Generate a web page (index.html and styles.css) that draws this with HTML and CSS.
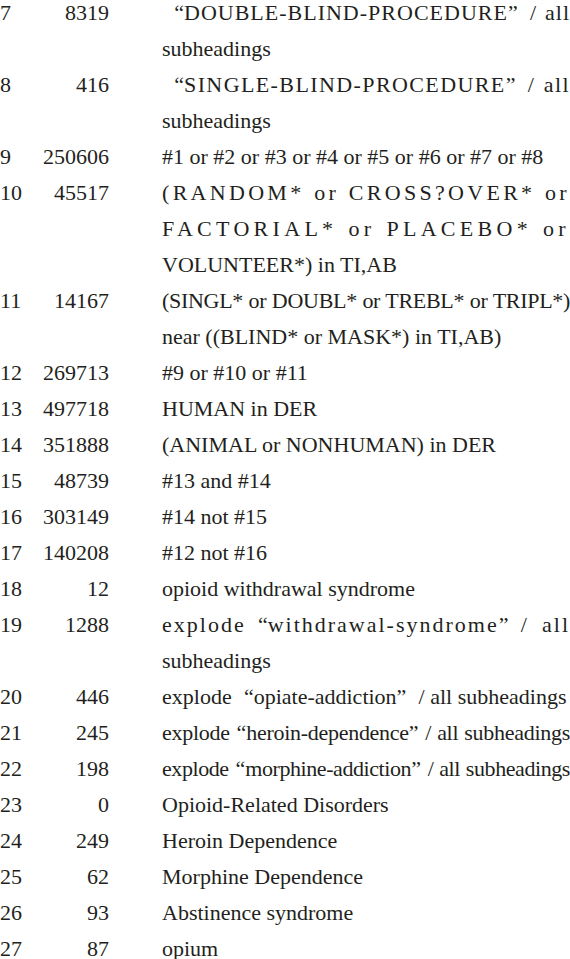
FILE: index.html
```html
<!DOCTYPE html>
<html lang="en">
<head>
<meta charset="utf-8">
<title>Search strategy</title>
<link rel="stylesheet" href="styles.css">
</head>
<body>
<div class="table">
  <div class="row"><span class="num">7</span><span class="count">8319</span>
    <div class="query"><span class="line spread s1"><span class="ql">“</span>DOUBLE-BLIND-PROCEDURE<span class="qr">”</span>/ all</span><span class="line">subheadings</span></div></div>
  <div class="row"><span class="num">8</span><span class="count">416</span>
    <div class="query"><span class="line spread s1b"><span class="ql">“</span>SINGLE-BLIND-PROCEDURE<span class="qr">”</span>/ all</span><span class="line">subheadings</span></div></div>
  <div class="row"><span class="num">9</span><span class="count">250606</span>
    <div class="query"><span class="line">#1 or #2 or #3 or #4 or #5 or #6 or #7 or #8</span></div></div>
  <div class="row"><span class="num">10</span><span class="count">45517</span>
    <div class="query"><span class="line spread s2">(RANDOM* or CROSS?OVER* or</span><span class="line spread s3">FACTORIAL* or PLACEBO* or</span><span class="line">VOLUNTEER*) in TI,AB</span></div></div>
  <div class="row"><span class="num">11</span><span class="count">14167</span>
    <div class="query"><span class="line spread tight">(SINGL* or DOUBL* or TREBL* or TRIPL*)</span><span class="line">near ((BLIND* or MASK*) in TI,AB)</span></div></div>
  <div class="row"><span class="num">12</span><span class="count">269713</span>
    <div class="query"><span class="line">#9 or #10 or #11</span></div></div>
  <div class="row"><span class="num">13</span><span class="count">497718</span>
    <div class="query"><span class="line">HUMAN in DER</span></div></div>
  <div class="row"><span class="num">14</span><span class="count">351888</span>
    <div class="query"><span class="line">(ANIMAL or NONHUMAN) in DER</span></div></div>
  <div class="row"><span class="num">15</span><span class="count">48739</span>
    <div class="query"><span class="line">#13 and #14</span></div></div>
  <div class="row"><span class="num">16</span><span class="count">303149</span>
    <div class="query"><span class="line">#14 not #15</span></div></div>
  <div class="row"><span class="num">17</span><span class="count">140208</span>
    <div class="query"><span class="line">#12 not #16</span></div></div>
  <div class="row"><span class="num">18</span><span class="count">12</span>
    <div class="query"><span class="line">opioid withdrawal syndrome</span></div></div>
  <div class="row"><span class="num">19</span><span class="count">1288</span>
    <div class="query"><span class="line spread s4">explode<span class="ql">“</span>withdrawal-syndrome<span class="qr">”</span>/ all</span><span class="line">subheadings</span></div></div>
  <div class="row"><span class="num">20</span><span class="count">446</span>
    <div class="query"><span class="line">explode<span class="ql">“</span>opiate-addiction<span class="qr">”</span>/ all subheadings</span></div></div>
  <div class="row"><span class="num">21</span><span class="count">245</span>
    <div class="query"><span class="line spread squeeze1">explode<span class="ql narrow">“</span>heroin-dependence<span class="qr narrow">”</span>/ all subheadings</span></div></div>
  <div class="row"><span class="num">22</span><span class="count">198</span>
    <div class="query"><span class="line spread squeeze2">explode<span class="ql narrow">“</span>morphine-addiction<span class="qr narrow">”</span>/ all subheadings</span></div></div>
  <div class="row"><span class="num">23</span><span class="count">0</span>
    <div class="query"><span class="line">Opioid-Related Disorders</span></div></div>
  <div class="row"><span class="num">24</span><span class="count">249</span>
    <div class="query"><span class="line">Heroin Dependence</span></div></div>
  <div class="row"><span class="num">25</span><span class="count">62</span>
    <div class="query"><span class="line">Morphine Dependence</span></div></div>
  <div class="row"><span class="num">26</span><span class="count">93</span>
    <div class="query"><span class="line">Abstinence syndrome</span></div></div>
  <div class="row"><span class="num">27</span><span class="count">87</span>
    <div class="query"><span class="line">opium</span></div></div>
</div>
</body>
</html>
```

FILE: styles.css
```css
html, body {
  margin: 0;
  padding: 0;
  background: #ffffff;
}

body {
  font-family: "Liberation Serif", "Times New Roman", serif;
  font-size: 22px;
  line-height: 36px;
  color: #231f20;
  overflow: hidden;
}

.table {
  margin-top: -5px;
  width: 570px;
}

.row {
  display: grid;
  grid-template-columns: 40px 69px 1fr;
  align-items: start;
}

.num {
  text-align: left;
}

.count {
  text-align: right;
}

.query {
  padding-left: 53px;
  display: flex;
  flex-direction: column;
  min-width: 0;
}

.line {
  display: block;
  white-space: nowrap;
}

.spread {
  text-align: justify;
  text-align-last: justify;
}

.s1 { letter-spacing: 1px; }
.s1b { letter-spacing: 1.4px; }
.s2 { letter-spacing: 3.3px; }
.s3 { letter-spacing: 4.3px; }
.s4 { letter-spacing: 2px; }
.tight { letter-spacing: -0.3px; }
.squeeze1 { letter-spacing: -0.28px; }
.squeeze2 { letter-spacing: -0.42px; }

.ql, .qr {
  display: inline-block;
  width: 1em;
  letter-spacing: 0;
}

.ql {
  text-align: right;
  text-align-last: right;
}

.qr {
  text-align: left;
  text-align-last: left;
}

.ql.narrow, .qr.narrow { width: 0.75em; }
```
